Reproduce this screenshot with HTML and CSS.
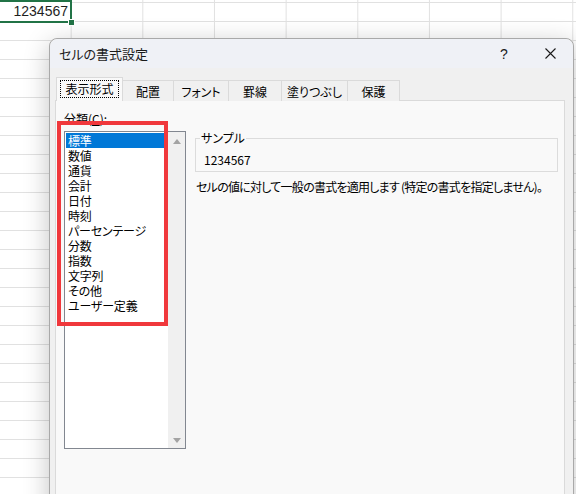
FILE: index.html
```html
<!DOCTYPE html>
<html lang="ja">
<head>
<meta charset="utf-8">
<title>セルの書式設定</title>
<link rel="stylesheet" href="styles.css">
</head>
<body>
<div class="sheet">
  <div class="cell-active">1234567<span class="fill-handle"></span></div>
</div>

<div class="dialog">
  <div class="titlebar">
    <span class="title">セルの書式設定</span>
    <span class="tb-btn help">?</span>
    <span class="tb-btn close">
      <svg width="11" height="11" viewBox="0 0 11 11"><path d="M0.5 0.5 L10.5 10.5 M10.5 0.5 L0.5 10.5" stroke="#1a1a1a" stroke-width="1.1" fill="none"/></svg>
    </span>
  </div>
  <div class="dialog-body">
    <div class="tabs">
      <div class="tab tab-active tab-format"><span class="focus">表示形式</span></div>
      <div class="tab tab-align">配置</div>
      <div class="tab tab-font">フォント</div>
      <div class="tab tab-border">罫線</div>
      <div class="tab tab-fill">塗りつぶし</div>
      <div class="tab tab-protect">保護</div>
    </div>
    <div class="panel">
      <div class="col-left">
        <div class="label">分類(<u>C</u>):</div>
        <div class="listbox">
          <ul class="items">
            <li class="item selected">標準</li>
            <li class="item">数値</li>
            <li class="item">通貨</li>
            <li class="item">会計</li>
            <li class="item">日付</li>
            <li class="item">時刻</li>
            <li class="item">パーセンテージ</li>
            <li class="item">分数</li>
            <li class="item">指数</li>
            <li class="item">文字列</li>
            <li class="item">その他</li>
            <li class="item">ユーザー定義</li>
          </ul>
          <div class="scrollbar">
            <span class="arrow-up"></span>
            <span class="arrow-down"></span>
          </div>
        </div>
      </div>
      <div class="col-right">
        <fieldset class="sample">
          <legend>サンプル</legend>
          <div class="sample-value">1234567</div>
        </fieldset>
        <p class="desc">セルの値に対して一般の書式を適用します (特定の書式を指定しません)。</p>
      </div>
      <div class="highlight"></div>
    </div>
  </div>
</div>
</body>
</html>
```

FILE: styles.css
```css
html, body {
  margin: 0;
  padding: 0;
  overflow: hidden;
  width: 576px;
  height: 494px;
  background: #ffffff;
}

.sheet {
  width: 576px;
  height: 494px;
  background-color: #ffffff;
  background-image:
    linear-gradient(to right, transparent calc(100% - 1px), #e1e1e1 calc(100% - 1px)),
    linear-gradient(to bottom, transparent calc(100% - 1px), #e1e1e1 calc(100% - 1px));
  background-size: 71.67px 100%, 100% 19px;
  background-position: 0 0, 0 3px;
}

.cell-active {
  position: relative;
  box-sizing: border-box;
  margin-left: -3px;
  width: 75px;
  height: 23px;
  border: 2px solid #217346;
  background: #ffffff;
  text-align: right;
  padding-right: 2px;
  font-family: "Liberation Sans", Arial, sans-serif;
  font-size: 14px;
  line-height: 19px;
  color: #1e1e1e;
}

.fill-handle {
  position: absolute;
  right: -5px;
  bottom: -5px;
  width: 5px;
  height: 5px;
  background: #217346;
  border: 1px solid #ffffff;
}

.dialog {
  position: absolute;
  left: 49px;
  top: 38px;
  width: 525px;
  height: 480px;
  box-sizing: border-box;
  border: 1px solid #a9a9a9;
  border-radius: 8px 8px 0 0;
  background: #f0f0f0;
  box-shadow: 0 6px 26px rgba(0, 0, 0, 0.24);
  font-family: "Noto Sans CJK JP", "Noto Sans", sans-serif;
  font-feature-settings: "palt";
  font-size: 12px;
  color: #000000;
  overflow: hidden;
}

.titlebar {
  display: flex;
  align-items: center;
  height: 29px;
  background: #eff1f6;
  border-radius: 8px 8px 0 0;
}

.title {
  flex: 1;
  padding-left: 9px;
  font-size: 13px;
  color: #1a1a1a;
}

.tb-btn {
  width: 46px;
  height: 29px;
  display: flex;
  align-items: center;
  justify-content: center;
}

.help {
  font-family: "Liberation Sans", Arial, sans-serif;
  font-size: 14px;
  color: #1a1a1a;
}

.dialog-body {
  padding: 9px 8px 0 5px;
}

.tabs {
  display: flex;
  align-items: flex-end;
  margin-left: 1px;
  margin-bottom: -1px;
  position: relative;
  z-index: 1;
}

.tab {
  box-sizing: border-box;
  height: 21px;
  border: 1px solid #dadada;
  border-bottom: none;
  margin-left: -1px;
  background: #f0f0f0;
  display: flex;
  align-items: center;
  justify-content: center;
  color: #000000;
}

.tab-active {
  height: 24px;
  margin-left: 0;
  background: #f9f9f9;
  padding-bottom: 1px;
}

.focus {
  box-sizing: border-box;
  display: block;
  width: 59px;
  height: 18px;
  line-height: 16px;
  text-align: center;
  border: 1px dotted #000000;
}

.tab-format { width: 67px; }
.tab-align { width: 52px; }
.tab-font { width: 56px; }
.tab-border { width: 54px; }
.tab-fill { width: 67px; }
.tab-protect { width: 53px; }

.panel {
  position: relative;
  display: flex;
  gap: 9px;
  height: 420px;
  box-sizing: border-box;
  border: 1px solid #dadada;
  background: #f9f9f9;
  padding: 10px 6px 0 8px;
}

.col-left {
  width: 122px;
  flex: none;
}

.label {
  line-height: 16px;
  height: 16px;
  margin-bottom: 4px;
}

.listbox {
  box-sizing: border-box;
  width: 122px;
  height: 318px;
  border: 1px solid #828790;
  background: #ffffff;
  display: flex;
}

.items {
  list-style: none;
  margin: 0;
  padding: 1px 0 0 1px;
  flex: 1;
}

.item {
  height: 15px;
  line-height: 15px;
  padding-left: 2px;
  white-space: nowrap;
  color: #000000;
  letter-spacing: -0.2px;
}

.item.selected {
  background: #0078d7;
  color: #ffffff;
}

.scrollbar {
  width: 17px;
  flex: none;
  background: #f0f0f0;
  display: flex;
  flex-direction: column;
  justify-content: space-between;
  align-items: center;
  padding: 7px 0 5px;
}

.arrow-up {
  width: 0;
  height: 0;
  border-left: 4.5px solid transparent;
  border-right: 4.5px solid transparent;
  border-bottom: 5px solid #a3a3a3;
}

.arrow-down {
  width: 0;
  height: 0;
  border-left: 4.5px solid transparent;
  border-right: 4.5px solid transparent;
  border-top: 5px solid #a3a3a3;
}

.col-right {
  flex: 1;
  min-width: 0;
}

.sample {
  margin: 19px 0 0 0;
  padding: 6px 8px 3px 8px;
  border: 1px solid #dcdcdc;
  min-width: 0;
}

.sample legend {
  padding: 0 1px;
  margin-left: -4px;
  line-height: 16px;
}

.sample-value {
  line-height: 16px;
}

.desc {
  margin: 7px 0 0 1px;
  line-height: 16px;
  white-space: nowrap;
  letter-spacing: -0.75px;
}

.highlight {
  position: absolute;
  left: 1px;
  top: 20px;
  width: 111px;
  height: 205px;
  box-sizing: border-box;
  border: 4px solid #f0383c;
}
```
